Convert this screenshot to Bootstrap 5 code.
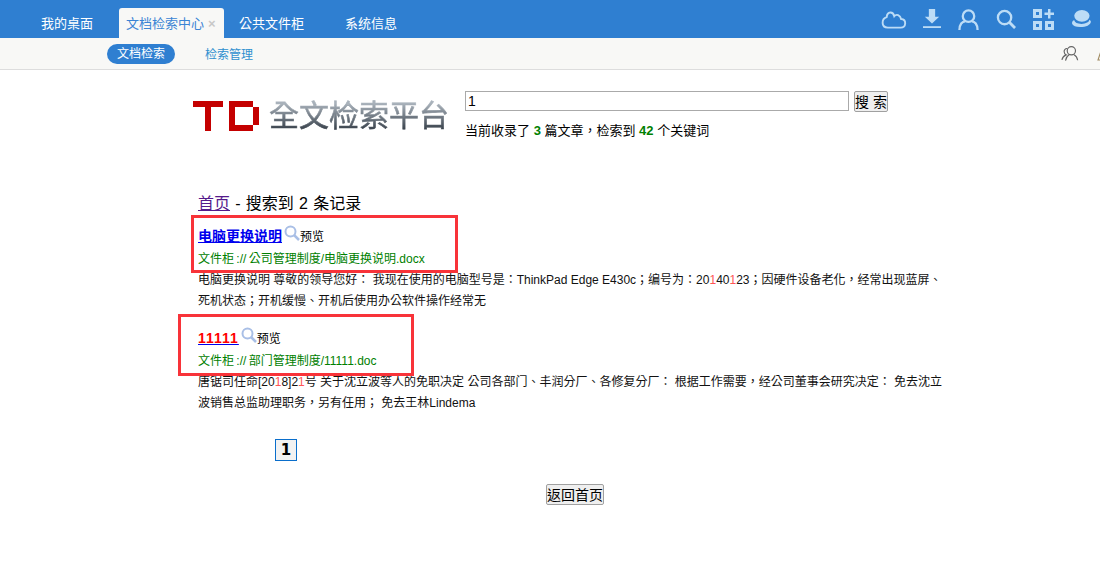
<!DOCTYPE html>
<html>
<head>
<meta charset="utf-8">
<title>全文检索平台</title>
<link href="https://cdn.jsdelivr.net/npm/bootstrap@5.3.0/dist/css/bootstrap.min.css" rel="stylesheet">
<style>
html,body{height:571px;overflow:hidden}
body{background:#fff;color:#000;font-family:"Liberation Sans","Noto Sans CJK TC",sans-serif;font-size:12px;line-height:normal}
a{color:inherit}
.topbar{height:38px;background:#2f7fd1;padding-left:26px}
.tabitem{height:30px;padding:0 15px;line-height:31px;font-size:13px;color:#fff;margin-right:0}
.tabitem.on{width:105px;padding:0 0 0 7px;margin:0 0 0 11px;background:#f8f8f6;color:#3a84d4;border-radius:3px 3px 0 0;white-space:nowrap}
.tabwide{padding:0 26px 0 15px}
.tabx{color:#c8c8c8;font-size:13px;font-weight:700;margin-left:4px}
.topicons{padding-right:8px}
.topicons svg{display:block}
.icongap{margin-left:16px}
.icongapw{margin-left:17px}
.subbar{height:32px;background:#f8f8f6;border-bottom:1px solid #ddd;padding-left:107px;overflow:hidden}
.pillon{width:68px;height:20px;line-height:20px;border-radius:10px;background:#2f7fd1;color:#fff;text-align:center;margin-right:30px}
.pilloff{color:#2e8fcf}
.subicons{margin-left:auto;gap:18px;margin-right:-6px}
.mainwrap{width:747px;margin-left:193px;position:relative}
.headrow{padding-top:21px;height:124px}
.logomark{display:block}
.logotext{font-size:30px;line-height:36px;margin-left:9px;width:178px;white-space:nowrap;background:linear-gradient(#a9b2bb 15%,#3d4650 85%);-webkit-background-clip:text;background-clip:text;color:transparent;-webkit-text-stroke:.6px transparent}
.logocell{width:272px;padding-top:7px}
.qinput{width:384px;height:20px;border:1px solid #aaa;font-size:14px;padding:0 2px;line-height:18px;outline:0;border-radius:0;color:#000}
.qbtn{width:34px;height:21px;border:1px solid #a0a0a0;background:#efefef;border-radius:2px;font-size:14px;padding:0;margin-left:5px;line-height:18px;white-space:nowrap;color:#000}
.stat{font-size:13px;margin-top:10px;line-height:18px}
.stat b{color:#008000}
.resarea{padding-left:5px;height:245px}
.crumb{font-size:16px;line-height:20px;margin-bottom:13px;word-spacing:.8px}
.crumb a{color:#551a8b}
.restitle{font-size:14px;font-weight:700;color:#00e;text-decoration:underline;line-height:18px}
.restitle .hit{color:#f00;letter-spacing:1px}
.resprev{font-size:12px}
.glass{margin:-9px 0 0 2px;vertical-align:middle}
.respath{color:#008000;font-size:12px;line-height:16px;margin-top:6px;word-spacing:-1px}
.resbody{font-size:12px;line-height:21px;margin-top:3px;color:#111;white-space:nowrap}
.resbody .hit{color:#f55}
.resitem{margin-bottom:17px}
.markbox{position:absolute;border:3px solid #f83339;pointer-events:none}
.mb1{left:-2px;top:145px;width:267px;height:58px}
.mb2{left:-15px;top:244px;width:236px;height:62px}
.pagerow{padding-left:82px;height:45px}
.pagenum{display:inline-block;width:22px;height:22px;line-height:20px;text-align:center;border:1px solid #0a6ecb;background:#f2f2f2;font-size:15px;font-weight:700;font-family:"DejaVu Sans",sans-serif}
.backrow{padding-left:353px}
.backbtn{width:58px;height:21px;border:1px solid #a0a0a0;background:#efefef;border-radius:2px;font-size:14px;padding:0;line-height:18px;color:#000;white-space:nowrap}
</style>
</head>
<body>
<nav class="topbar d-flex justify-content-between align-items-end">
  <div class="d-flex align-items-end">
    <div class="tabitem">我的桌面</div>
    <div class="tabitem on">文档检索中心<span class="tabx">×</span></div>
    <div class="tabitem tabwide">公共文件柜</div>
    <div class="tabitem">系统信息</div>
  </div>
  <div class="topicons d-flex align-items-center align-self-stretch">
    <svg width="26" height="19" viewBox="0 0 27 20" fill="none" stroke="#bcdcf6" stroke-width="2"><path d="M7 18.500h13.500c6 0 6.500-8.500.5-9C20 5 16 4 13.800 6.500 12.500 1.500 6.500 1 5.800 7.500.3 9-.5 18.500 7 18.500z"/></svg>
    <svg class="icongap" width="18" height="20" viewBox="0 0 20 22" fill="#bcdcf6"><path d="M6.500 0h7v8.500h4.500L10 16 2 8.500h4.500z"/><rect x="0" y="19" width="20" height="2"/></svg>
    <svg class="icongapw" width="21" height="21" viewBox="0 0 22 22" fill="none" stroke="#bcdcf6" stroke-width="2.400"><circle cx="11" cy="7.500" r="6"/><path d="M1.500 22c0-6 3-9 6-9M20.500 22c0-6-3-9-6-9"/></svg>
    <svg class="icongapw" width="20" height="20" viewBox="0 0 21 21" fill="none" stroke="#bcdcf6" stroke-width="2.400"><circle cx="9" cy="9" r="7"/><path d="M14 14l6 6" stroke-width="3"/></svg>
    <svg class="icongapw" width="21" height="21" viewBox="0 0 21 21" fill="#bcdcf6"><path fill-rule="evenodd" d="M0 0h9v9H0zM3 3v3h3V3zM0 12h9v9H0zM3 15v3h3v-3zM12 12h9v9h-9zM15 15v3h3v-3z"/><path d="M15 0h2.500v3.500H21V6h-3.500v3.500H15V6h-3.500V3.500H15z"/></svg>
    <svg class="icongap" width="22" height="18" viewBox="0 0 22 20" fill="#bcdcf6"><ellipse cx="12" cy="6.500" rx="8.500" ry="6.500"/><path d="M3 11.500C-.5 13.500 0 19 10 19c7 0 11.500-2.500 12-6-.2-1-1-1.800-1.800-2.200.3 2-3.700 4.700-8.700 4.700-4.500 0-7.500-1.500-8-4z"/></svg>
  </div>
</nav>
<div class="subbar d-flex align-items-center">
  <div class="pillon">文档检索</div>
  <div class="pilloff">检索管理</div>
  <div class="subicons d-flex align-items-center">
    <svg width="18" height="17" viewBox="0 0 20 18" fill="none" stroke="#666" stroke-width="1.300"><circle cx="11.500" cy="6" r="4.600"/><path d="M7 3.500C5 3 3.300 5 3.500 7c.2 2 1 3 2.200 3.500C3 11.500 1.500 14 1 16M9 10.500C6.500 12 5.500 14 5 17M14.500 10.500c2 1 3.500 3 4 6"/></svg>
    <svg class="flex-shrink-0" width="9" height="17" viewBox="0 0 9 17" fill="none" stroke="#a08a60" stroke-width="1.100"><path d="M5 3L1 15h8"/></svg>
  </div>
</div>
<main class="mainwrap">
  <div class="headrow d-flex">
    <div class="logocell d-flex align-items-center align-self-start">
      <svg class="logomark" width="67" height="30" viewBox="0 0 67 30" fill="#c40000"><rect x="0" y="0" width="30" height="6"/><rect x="12" y="0" width="6" height="30"/><path fill-rule="evenodd" d="M36 0h24v6h6v18h-6v6H36zM42 6v18h18V6z"/></svg>
      <span class="logotext">全文检索平台</span>
    </div>
    <div>
      <div class="d-flex align-items-start">
        <input class="qinput" type="text" value="1">
        <button class="qbtn" type="button">搜 索</button>
      </div>
      <div class="stat">当前收录了 <b>3</b> 篇文章，检索到 <b>42</b> 个关键词</div>
    </div>
  </div>
  <div class="resarea">
    <div class="crumb"><a href="#">首页</a> - 搜索到 2 条记录</div>
    <div class="resitem">
      <div><a href="#" class="restitle">电脑更换说明</a><svg class="glass" width="16" height="16" viewBox="0 0 16 16" fill="none" stroke="#a9bfe6" stroke-width="2"><circle cx="6.500" cy="6.500" r="5"/><path d="M10 10l5 5" stroke-width="2.500"/></svg><span class="resprev">预览</span></div>
      <div class="respath">文件柜 :// 公司管理制度/电脑更换说明.docx</div>
      <div class="resbody">电脑更换说明 尊敬的领导您好： 我现在使用的电脑型号是：ThinkPad Edge E430c；编号为：20<span class="hit">1</span>40<span class="hit">1</span>23；因硬件设备老化，经常出现蓝屏、<br>死机状态；开机缓慢、开机后使用办公软件操作经常无</div>
    </div>
    <div class="resitem">
      <div><a href="#" class="restitle"><span class="hit">11111</span></a><svg class="glass" width="16" height="16" viewBox="0 0 16 16" fill="none" stroke="#a9bfe6" stroke-width="2"><circle cx="6.500" cy="6.500" r="5"/><path d="M10 10l5 5" stroke-width="2.500"/></svg><span class="resprev">预览</span></div>
      <div class="respath">文件柜 :// 部门管理制度/11111.doc</div>
      <div class="resbody">唐锯司任命[20<span class="hit">1</span>8]2<span class="hit">1</span>号 关于沈立波等人的免职决定 公司各部门、丰润分厂、各修复分厂： 根据工作需要，经公司董事会研究决定： 免去沈立<br>波销售总监助理职务，另有任用； 免去王林Lindema</div>
    </div>
  </div>
  <div class="pagerow"><span class="pagenum">1</span></div>
  <div class="backrow"><button class="backbtn" type="button">返回首页</button></div>
  <div class="markbox mb1"></div>
  <div class="markbox mb2"></div>
</main>
<script src="https://cdn.jsdelivr.net/npm/bootstrap@5.3.0/dist/js/bootstrap.bundle.min.js"></script>
</body>
</html>
